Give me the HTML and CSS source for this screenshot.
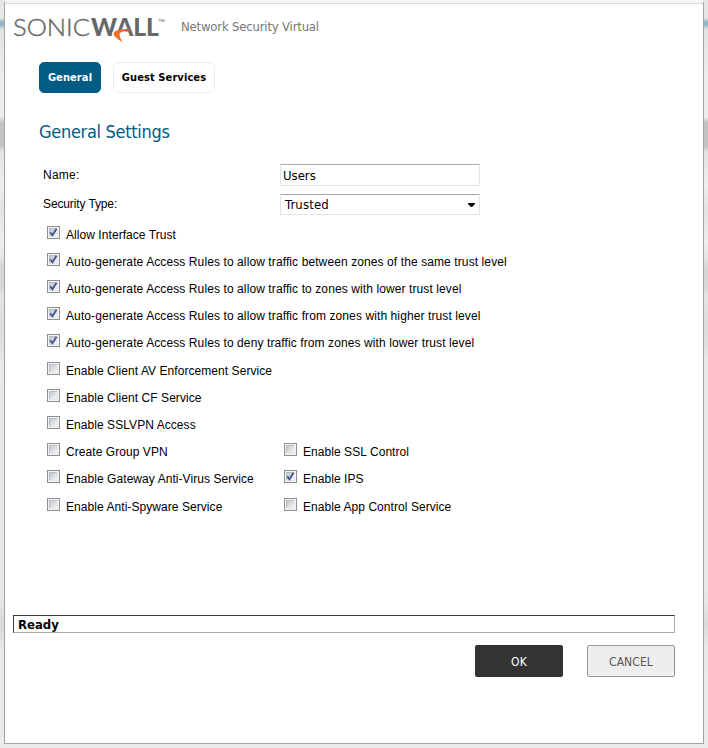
FILE: index.html
```
<!DOCTYPE html>
<html lang="en">
<head>
<meta charset="utf-8">
<title>SonicWall - General Settings</title>
<link rel="stylesheet" href="styles.css">
</head>
<body>
<svg width="0" height="0" class="defs"><defs>
<linearGradient id="shade" x1="0" y1="0" x2="1" y2="1"><stop offset="0" stop-color="#c3c8ce"/><stop offset="1" stop-color="#f7f7f7"/></linearGradient>
<symbol id="off" viewBox="0 0 13 13"><path fill="#8e8f8f" d="M0 0h13v13H0z"/><path fill="#f4f4f4" d="M1 1h11v11H1z"/><path fill="#b8bdc3" d="M2 2h9v9H2z"/><path fill="#e6e7e8" d="M10 2h1v9H2v-1h8z"/><path fill="url(#shade)" d="M3 3h7v7H3z"/></symbol>
<symbol id="on" viewBox="0 0 13 13"><use href="#off"/><path d="M3.3 6.2 5.4 9.3 9.5 2.8" fill="none" stroke="#405898" stroke-width="1.9"/></symbol>
</defs></svg>
<main class="window">
  <header class="brand">
    <svg class="logo" width="153" height="30" viewBox="0 0 153 30">
      <text class="sonic" x="0" y="24" textLength="77" lengthAdjust="spacingAndGlyphs">SONIC</text>
      <text class="wall" x="78" y="24" textLength="68" lengthAdjust="spacingAndGlyphs">WALL</text>
      <path fill="#fff" d="M99 20.5Q103 17.5 112 17.5L112 25 101 25z"/>
      <path fill="#f36c21" d="M120.5 18C113 19 106 19.6 106.5 22.5 106.7 25 108 27.5 109.8 30.5 104 26.7 99.8 23.8 100.8 21 102.2 17.4 111 17.2 120.5 18z"/>
      <text class="tm" x="145" y="12">™</text>
    </svg>
    <span class="product">Network Security Virtual</span>
  </header>
  <nav class="tabs"><a class="tab active"><span>General</span></a><a class="tab"><span>Guest Services</span></a></nav>
  <h1>General Settings</h1>
  <section class="fields">
    <label>Name:</label><div class="input">Users</div>
    <label>Security Type:</label><div class="input select"><span>Trusted</span><svg width="7" height="4" viewBox="0 0 7 4"><path d="M0 0h7v1L4 4H3L0 1z"/></svg></div>
  </section>
  <section class="options">
    <div class="option"><svg><use href="#on"/></svg><span>Allow Interface Trust</span></div>
    <div class="option wide"><svg><use href="#on"/></svg><span>Auto-generate Access Rules to allow traffic between zones of the same trust level</span></div>
    <div class="option wide"><svg><use href="#on"/></svg><span>Auto-generate Access Rules to allow traffic to zones with lower trust level</span></div>
    <div class="option wide"><svg><use href="#on"/></svg><span>Auto-generate Access Rules to allow traffic from zones with higher trust level</span></div>
    <div class="option tall wide"><svg><use href="#on"/></svg><span>Auto-generate Access Rules to deny traffic from zones with lower trust level</span></div>
    <div class="option"><svg><use href="#off"/></svg><span>Enable Client AV Enforcement Service</span></div>
    <div class="option"><svg><use href="#off"/></svg><span>Enable Client CF Service</span></div>
    <div class="option"><svg><use href="#off"/></svg><span>Enable SSLVPN Access</span></div>
    <div class="pair">
      <div class="option"><svg><use href="#off"/></svg><span>Create Group VPN</span></div>
      <div class="option"><svg><use href="#off"/></svg><span>Enable SSL Control</span></div>
      <div class="option tall"><svg><use href="#off"/></svg><span>Enable Gateway Anti-Virus Service</span></div>
      <div class="option tall"><svg><use href="#on"/></svg><span>Enable IPS</span></div>
      <div class="option"><svg><use href="#off"/></svg><span>Enable Anti-Spyware Service</span></div>
      <div class="option"><svg><use href="#off"/></svg><span>Enable App Control Service</span></div>
    </div>
  </section>
  <footer>
    <div class="status"><span>Ready</span></div>
    <div class="buttons"><button class="ok">OK</button><button>CANCEL</button></div>
  </footer>
</main>
</body>
</html>
```
FILE: styles.css
```
* { box-sizing: border-box; }
body {
  margin: 0; height: 748px; padding: 0 4px; overflow: hidden;
  font-family: "Liberation Sans", Arial, sans-serif; color: #000;
  background: linear-gradient(#e4e6e8 0, #e5e7e8 18px, #91b6c5 22px, #91b6c5 25px, #e0e3e4 29px, #ececed 75px, #ececed 117px, #c3c3c4 122px, #c3c3c4 146px, #e2e3e4 152px, #eeeeef 185px, #e2e3e4 210px, #eeeeef 243px, #e4e4e5 258px, #d5d6d6 268px, #d5d6d6 285px, #e4e5e6 298px, #dcddde 320px, #dcddde 340px, #e8e8e9 360px, #e6e7e8 600px, #d9d9d9 624px, #e9e9e9 650px, #ebebeb 748px);
}
.defs { display: block; }
.window {
  width: 700px; height: 744px; display: flex; flex-direction: column;
  background: #fff; border: 1px solid #a3a3a3; border-top: 3px solid #f6f6f6;
}
.brand { height: 38px; display: flex; border-top: 1px solid #dcdcdc; padding: 8px 0 0 8px; }
.logo { overflow: visible; flex: none; }
.sonic, .wall { font-family: Lato, sans-serif; font-size: 24px; fill: #66686a; }
.sonic { font-weight: 300; stroke: #66686a; stroke-width: .4px; }
.wall { font-weight: 900; }
.tm { font: 7px "Liberation Sans"; fill: #66686a; }
.product { font: 13px/20px "DejaVu Sans Condensed", "DejaVu Sans", sans-serif; font-stretch: condensed; letter-spacing: -.19px; color: #777; margin: 5px 0 0 15px; white-space: nowrap; }
.tabs { display: flex; gap: 12px; margin: 21px 0 0 34px; }
.tab {
  width: 102px; height: 31px; border: 1px solid #ededed; border-radius: 5px;
  display: flex; align-items: center; justify-content: center; white-space: nowrap;
  font: bold 11px "DejaVu Sans Condensed", "DejaVu Sans", sans-serif; letter-spacing: .1px;
}
.tab.active { width: 62px; background: #005c84; border-color: #005c84; color: #fff; }
h1 { margin: 27px 0 0 34px; font: 18px/24px "DejaVu Sans Condensed", "DejaVu Sans", sans-serif; letter-spacing: -.3px; color: #005c84; }
.fields { display: grid; grid-template-columns: 237px 200px; row-gap: 8px; margin: 20px 0 0 38px; font-size: 12px; }
.fields label { line-height: 22px; }
.fields label:nth-of-type(1) { letter-spacing: .25px; }
.fields label:nth-of-type(2) { line-height: 20px; letter-spacing: -.12px; }
.input {
  height: 22px; border: 1px solid #dfe3ea; border-top-color: #a7a9ad; border-radius: 1px;
  padding: 0 2px; font: 13px/21px "DejaVu Sans Condensed", "DejaVu Sans", sans-serif; letter-spacing: 0;
}
.select { height: 21px; padding: 0 4px; display: flex; align-items: center; justify-content: space-between; letter-spacing: .15px; }
.options { margin: 8px 0 0 42px; font-size: 12px; }
.option { height: 27px; display: flex; align-items: flex-start; gap: 6px; white-space: nowrap; padding-top: 3px; letter-spacing: .06px; }
.option.wide { letter-spacing: .1px; }
.option.tall { height: 28px; }
.option svg { width: 13px; height: 13px; flex: none; }
.option span { line-height: 16px; padding-top: 1px; }
.pair { display: grid; grid-template-columns: 237px 237px; }
footer { margin: auto 28px 66px 8px; }
.status { height: 18px; border: 1px solid #aaa; border-top-color: #3a3a3a; border-left-color: #3a3a3a; font: bold 13px/17px "DejaVu Sans Condensed", "DejaVu Sans", sans-serif; padding-left: 4px; }
.buttons { display: flex; justify-content: flex-end; gap: 24px; margin-top: 12px; }
button { width: 88px; height: 32px; padding: 0; border: 1px solid #999; border-radius: 2px; background: #eee; color: #555; font: 12px/18px "DejaVu Sans Condensed", "DejaVu Sans", sans-serif; letter-spacing: .1px; padding-top: 1px; }
button.ok { background: #333; border-color: #333; color: #fff; }
```
